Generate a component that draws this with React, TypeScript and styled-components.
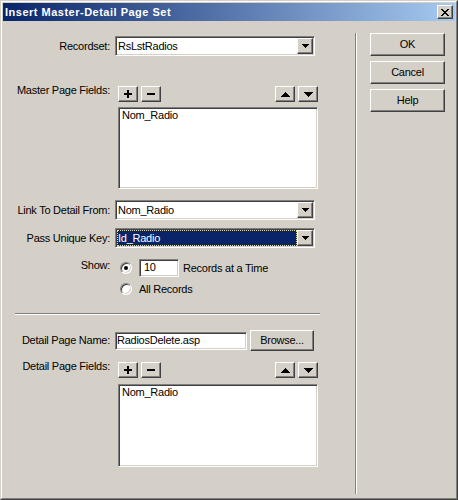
import * as React from 'react';
import styled, { createGlobalStyle } from 'styled-components';

const FACE = '#D4D0C8';
const SHADOW = '#808080';
const DARK = '#404040';
const HILITE = '#FFFFFF';

const GlobalStyle = createGlobalStyle`
    html, body {
        margin: 0;
        padding: 0;
        background: ${FACE};
    }
    body {
        font-family: Tahoma, "Liberation Sans", Arial, sans-serif;
        font-size: 11px;
        letter-spacing: -0.25px;
        color: #000;
    }
`;

const Window = styled.div`
    width: 458px;
    height: 500px;
    box-sizing: border-box;
    border: 1px solid;
    border-color: ${FACE} ${DARK} ${DARK} ${FACE};
    background: ${FACE};
    display: flex;
    flex-direction: column;
`;

const WindowInner = styled.div`
    flex: 1;
    border: 1px solid;
    border-color: ${HILITE} ${SHADOW} ${SHADOW} ${HILITE};
    padding: 1px;
    display: flex;
    flex-direction: column;
`;

const TitleBar = styled.div`
    height: 18px;
    flex-shrink: 0;
    background: linear-gradient(to right, #0A246A, #A6CAF0);
    display: flex;
    align-items: center;
    justify-content: space-between;
    padding: 0 2px;
`;

const TitleText = styled.span`
    color: #fff;
    font-weight: bold;
    letter-spacing: 0.5px;
    line-height: 13px;
    white-space: nowrap;
`;

const raised = `
    box-sizing: border-box;
    background: ${FACE};
    border: 1px solid;
    border-color: ${HILITE} ${DARK} ${DARK} ${HILITE};
    box-shadow: inset -1px -1px ${SHADOW};
`;

const sunken = `
    box-sizing: border-box;
    background: #fff;
    border: 1px solid;
    border-color: ${SHADOW} ${HILITE} ${HILITE} ${SHADOW};
    box-shadow: inset 1px 1px ${DARK}, inset -1px -1px ${FACE};
`;

const CloseButton = styled.div`
    ${raised}
    width: 16px;
    height: 14px;
    display: flex;
    align-items: center;
    justify-content: center;
`;

const Body = styled.div`
    flex: 1;
    display: flex;
`;

const LeftPane = styled.div`
    width: 352px;
    flex-shrink: 0;
    display: flex;
    flex-direction: column;
`;

const VSeparator = styled.div`
    width: 0;
    border-left: 1px solid ${SHADOW};
    border-right: 1px solid ${HILITE};
    margin: 12px 0 3px;
`;

const RightPane = styled.div`
    padding: 12px 0 0 13px;
    display: flex;
    flex-direction: column;
    gap: 5px;
`;

const DialogButton = styled.div`
    ${raised}
    width: 75px;
    height: 23px;
    display: flex;
    align-items: center;
    justify-content: center;
    line-height: 13px;
`;

const FieldRow = styled.div<{ $mt: number; $align?: string }>`
    display: flex;
    align-items: ${props => props.$align || 'center'};
    gap: 5px;
    margin-top: ${props => props.$mt}px;
`;

const FieldLabel = styled.div<{ $shift?: number }>`
    width: 107px;
    flex-shrink: 0;
    text-align: right;
    line-height: 13px;
    white-space: nowrap;
    margin-top: ${props => props.$shift || 0}px;
`;

const Combo = styled.div`
    ${sunken}
    width: 200px;
    height: 20px;
    padding: 1px;
    display: flex;
`;

const ComboValue = styled.div<{ $selected?: boolean }>`
    flex: 1;
    box-sizing: border-box;
    padding-left: 1px;
    line-height: 16px;
    white-space: nowrap;
    background: ${props => props.$selected ? '#0A246A' : 'transparent'};
    color: ${props => props.$selected ? '#fff' : '#000'};
    outline: ${props => props.$selected ? '1px dotted #E8E070' : 'none'};
    outline-offset: -1px;
`;

const ComboButton = styled.div`
    ${raised}
    width: 16px;
    height: 16px;
    display: flex;
    align-items: center;
    justify-content: center;
`;

const FieldColumn = styled.div`
    display: flex;
    flex-direction: column;
    margin-left: 3px;
`;

const ToolRow = styled.div`
    width: 200px;
    display: flex;
    justify-content: space-between;
`;

const ToolGroup = styled.div`
    display: flex;
    gap: 3px;
`;

const ToolButton = styled.div`
    ${raised}
    width: 20px;
    height: 16px;
    display: flex;
    align-items: center;
    justify-content: center;
`;

const ListBox = styled.div<{ $h: number }>`
    ${sunken}
    width: 200px;
    height: ${props => props.$h}px;
    margin-top: ${props => props.$h > 82 ? 6 : 5}px;
    padding: 0 3px;
`;

const ListItem = styled.div`
    line-height: 14px;
    white-space: nowrap;
`;

const RadioLine = styled.div<{ $h: number }>`
    height: ${props => props.$h}px;
    display: flex;
    align-items: center;
`;

const Radio = styled.div<{ $checked?: boolean }>`
    width: 12px;
    height: 12px;
    box-sizing: border-box;
    border-radius: 50%;
    margin: 0 7px 0 5px;
    background: #fff;
    border: 1px solid;
    border-color: ${SHADOW} ${HILITE} ${HILITE} ${SHADOW};
    box-shadow: inset 1px 1px ${DARK}, inset -1px -1px ${FACE};
    display: flex;
    align-items: center;
    justify-content: center;
    &::after {
        content: '';
        width: 4px;
        height: 4px;
        border-radius: 50%;
        background: ${props => props.$checked ? '#000' : 'transparent'};
    }
`;

const TextBox = styled.div<{ $w: number; $pad: number }>`
    ${sunken}
    width: ${props => props.$w}px;
    height: 18px;
    padding-left: ${props => props.$pad}px;
    line-height: 14px;
    white-space: nowrap;
`;

const Caption = styled.span<{ $gap: number }>`
    line-height: 13px;
    white-space: nowrap;
    margin-left: ${props => props.$gap}px;
`;

const HSeparator = styled.div`
    width: 305px;
    height: 0;
    margin: 17px 0 0 12px;
    border-top: 1px solid ${SHADOW};
    border-bottom: 1px solid ${HILITE};
`;

const Controls = styled.div`
    display: flex;
    align-items: center;
    gap: 3px;
`;

const PushButton = styled.div`
    ${raised}
    width: 64px;
    height: 21px;
    display: flex;
    align-items: center;
    justify-content: center;
    line-height: 13px;
`;

type Cell = [number, number, number, number];

function Glyph({ w, h, cells }: { w: number; h: number; cells: Cell[] }) {
    return (
        <svg width={w} height={h} viewBox={`0 0 ${w} ${h}`} shapeRendering="crispEdges">
            {cells.map((c, i) => <rect key={i} x={c[0]} y={c[1]} width={c[2]} height={c[3]} fill="#000" />)}
        </svg>
    );
}

const arrowDown = (n: number): Cell[] => Array.from({ length: n }, (_, i) => [i, i, (n - i) * 2 - 1, 1] as Cell);
const arrowUp = (n: number): Cell[] => Array.from({ length: n }, (_, i) => [n - 1 - i, i, i * 2 + 1, 1] as Cell);

const closeCells: Cell[] = [
    [0, 0, 2, 1], [6, 0, 2, 1],
    [1, 1, 2, 1], [5, 1, 2, 1],
    [2, 2, 4, 1],
    [3, 3, 2, 1],
    [2, 4, 4, 1],
    [1, 5, 2, 1], [5, 5, 2, 1],
    [0, 6, 2, 1], [6, 6, 2, 1],
];

function Select({ value, selected }: { value: string; selected?: boolean }) {
    return (
        <Combo>
            <ComboValue $selected={selected}>{value}</ComboValue>
            <ComboButton><Glyph w={7} h={4} cells={arrowDown(4)} /></ComboButton>
        </Combo>
    );
}

function FieldList({ label, items, height }: { label: string; items: string[]; height: number }) {
    return (
        <>
            <FieldLabel $shift={-2}>{label}</FieldLabel>
            <FieldColumn>
                <ToolRow>
                    <ToolGroup>
                        <ToolButton><Glyph w={8} h={8} cells={[[3, 0, 2, 8], [0, 3, 8, 2]]} /></ToolButton>
                        <ToolButton><Glyph w={8} h={2} cells={[[0, 0, 8, 2]]} /></ToolButton>
                    </ToolGroup>
                    <ToolGroup>
                        <ToolButton><Glyph w={9} h={5} cells={arrowUp(5)} /></ToolButton>
                        <ToolButton><Glyph w={9} h={5} cells={arrowDown(5)} /></ToolButton>
                    </ToolGroup>
                </ToolRow>
                <ListBox $h={height}>
                    {items.map(item => <ListItem key={item}>{item}</ListItem>)}
                </ListBox>
            </FieldColumn>
        </>
    );
}

export default function App() {
    return (
        <>
            <GlobalStyle />
            <Window>
                <WindowInner>
                    <TitleBar>
                        <TitleText>Insert Master-Detail Page Set</TitleText>
                        <CloseButton><Glyph w={8} h={7} cells={closeCells} /></CloseButton>
                    </TitleBar>
                    <Body>
                        <LeftPane>
                            <FieldRow $mt={15}>
                                <FieldLabel>Recordset:</FieldLabel>
                                <Select value="RsLstRadios" />
                            </FieldRow>
                            <FieldRow $mt={30} $align="flex-start">
                                <FieldList label="Master Page Fields:" items={['Nom_Radio']} height={82} />
                            </FieldRow>
                            <FieldRow $mt={11}>
                                <FieldLabel>Link To Detail From:</FieldLabel>
                                <Select value="Nom_Radio" />
                            </FieldRow>
                            <FieldRow $mt={8}>
                                <FieldLabel>Pass Unique Key:</FieldLabel>
                                <Select value="Id_Radio" selected />
                            </FieldRow>
                            <FieldRow $mt={11} $align="flex-start">
                                <FieldLabel>Show:</FieldLabel>
                                <RadioLine $h={18}>
                                    <Radio $checked />
                                    <TextBox $w={40} $pad={4}>10</TextBox>
                                    <Caption $gap={4}>Records at a Time</Caption>
                                </RadioLine>
                            </FieldRow>
                            <FieldRow $mt={5}>
                                <FieldLabel />
                                <RadioLine $h={14}>
                                    <Radio />
                                    <Caption $gap={0}>All Records</Caption>
                                </RadioLine>
                            </FieldRow>
                            <HSeparator />
                            <FieldRow $mt={15}>
                                <FieldLabel>Detail Page Name:</FieldLabel>
                                <Controls>
                                    <TextBox $w={132} $pad={1}>RadiosDelete.asp</TextBox>
                                    <PushButton>Browse...</PushButton>
                                </Controls>
                            </FieldRow>
                            <FieldRow $mt={11} $align="flex-start">
                                <FieldList label="Detail Page Fields:" items={['Nom_Radio']} height={83} />
                            </FieldRow>
                        </LeftPane>
                        <VSeparator />
                        <RightPane>
                            <DialogButton>OK</DialogButton>
                            <DialogButton>Cancel</DialogButton>
                            <DialogButton>Help</DialogButton>
                        </RightPane>
                    </Body>
                </WindowInner>
            </Window>
        </>
    );
}
